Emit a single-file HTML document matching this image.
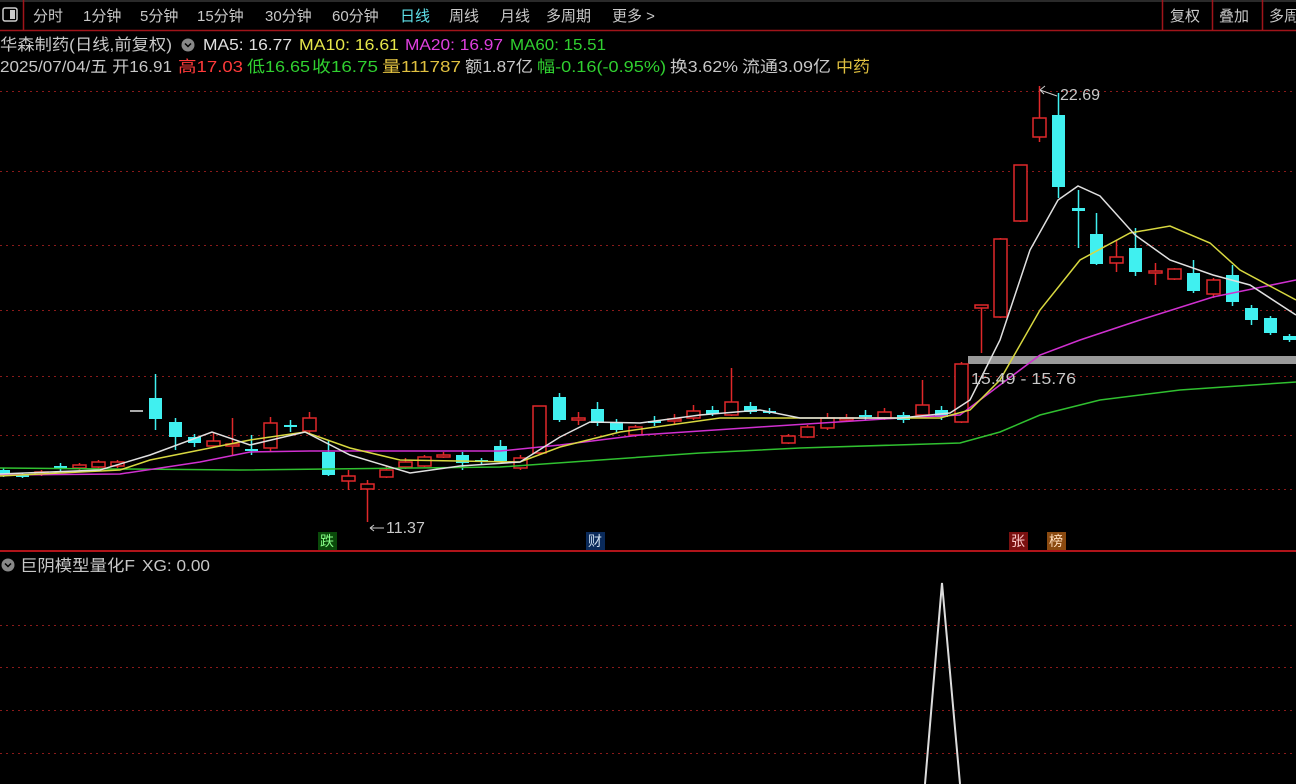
<!DOCTYPE html>
<html><head><meta charset="utf-8">
<style>
body{margin:0;background:#000;width:1296px;height:784px;overflow:hidden;font-family:"Liberation Sans","Noto Sans CJK SC",sans-serif;}
svg{position:absolute;left:0;top:0}
</style></head><body>
<svg id="s" width="1296" height="784" xmlns="http://www.w3.org/2000/svg" font-family="Liberation Sans, Noto Sans CJK SC, sans-serif">
<rect width="1296" height="784" fill="#000"/>
<line x1="0" y1="30.5" x2="1296" y2="30.5" stroke="#a0141a" stroke-width="1.5"/>
<line x1="0" y1="1" x2="1296" y2="1" stroke="#555"/>
<line x1="23.5" y1="0" x2="23.5" y2="30" stroke="#a0141a" stroke-width="1.5"/>
<rect x="3" y="8" width="14" height="13" rx="2" fill="none" stroke="#ccc" stroke-width="1.5"/>
<rect x="10" y="10" width="5" height="9" fill="#ccc"/>
<line x1="1162.5" y1="0" x2="1162.5" y2="30" stroke="#a0141a" stroke-width="1.5"/>
<line x1="1212.5" y1="0" x2="1212.5" y2="30" stroke="#a0141a" stroke-width="1.5"/>
<line x1="1262.5" y1="0" x2="1262.5" y2="30" stroke="#a0141a" stroke-width="1.5"/>
<g font-size="15" fill="#c8c8c8">
<text x="33" y="21">分时</text><text x="83" y="21">1分钟</text><text x="140" y="21">5分钟</text>
<text x="197" y="21">15分钟</text><text x="265" y="21">30分钟</text><text x="332" y="21">60分钟</text>
<text x="400" y="21" fill="#5fe0e8">日线</text><text x="449" y="21">周线</text><text x="500" y="21">月线</text>
<text x="546" y="21">多周期</text><text x="612" y="21">更多 &gt;</text>
<text x="1170" y="21">复权</text><text x="1219" y="21">叠加</text><text x="1269" y="21">多周</text>
</g>
<g font-size="16" lengthAdjust="spacingAndGlyphs">
<text x="0" y="50" fill="#c8c8c8" textLength="172" lengthAdjust="spacingAndGlyphs">华森制药(日线,前复权)</text>
<circle cx="188" cy="45" r="6.5" fill="#888"/><path d="M185 43.5l3 3 3-3" stroke="#000" stroke-width="1.5" fill="none"/>
<text x="203" y="50" fill="#e0e0e0" textLength="89" lengthAdjust="spacingAndGlyphs">MA5: 16.77</text>
<text x="299" y="50" fill="#e6e64a" textLength="100" lengthAdjust="spacingAndGlyphs">MA10: 16.61</text>
<text x="405" y="50" fill="#e040e0" textLength="98" lengthAdjust="spacingAndGlyphs">MA20: 16.97</text>
<text x="510" y="50" fill="#30d030" textLength="96" lengthAdjust="spacingAndGlyphs">MA60: 15.51</text>
<text x="0" y="72" fill="#c8c8c8" textLength="172" lengthAdjust="spacingAndGlyphs">2025/07/04/五 开16.91</text>
<text x="178" y="72" fill="#ff3a3a" textLength="65" lengthAdjust="spacingAndGlyphs">高17.03</text>
<text x="247" y="72" fill="#30d030" textLength="63" lengthAdjust="spacingAndGlyphs">低16.65</text>
<text x="312" y="72" fill="#30d030" textLength="66" lengthAdjust="spacingAndGlyphs">收16.75</text>
<text x="382" y="72" fill="#e0c040" textLength="79" lengthAdjust="spacingAndGlyphs">量111787</text>
<text x="465" y="72" fill="#c8c8c8" textLength="68" lengthAdjust="spacingAndGlyphs">额1.87亿</text>
<text x="537" y="72" fill="#30d030" textLength="129" lengthAdjust="spacingAndGlyphs">幅-0.16(-0.95%)</text>
<text x="670" y="72" fill="#c8c8c8" textLength="68" lengthAdjust="spacingAndGlyphs">换3.62%</text>
<text x="742" y="72" fill="#c8c8c8" textLength="89" lengthAdjust="spacingAndGlyphs">流通3.09亿</text>
<text x="836" y="72" fill="#e0c040" textLength="34" lengthAdjust="spacingAndGlyphs">中药</text>
</g>
<g id="grid" stroke="#8a1a1a" stroke-width="1" stroke-dasharray="2 4"></g>
<line x1="0" y1="551" x2="1296" y2="551" stroke="#b0141a" stroke-width="2"/>
<rect x="968" y="356" width="328" height="8" fill="#9a9a9a"/>
<g id="c"></g>
<g id="ma" fill="none" stroke-width="1.5"></g>
<g font-size="16" fill="#c8c8c8">
<text x="971" y="384" textLength="105" lengthAdjust="spacingAndGlyphs">15.49 - 15.76</text>
<text x="1060" y="100">22.69</text>
<path d="M1040 90l17 6M1040 90l5-4M1040 90l4 4" stroke="#ccc" fill="none"/>
<text x="386" y="533">11.37</text>
<path d="M370 528h14M370 528l4-3M370 528l4 3" stroke="#ccc" fill="none"/>
</g>
<g font-size="14">
<rect x="318" y="532" width="19" height="18" fill="#0a4a0a"/><text x="320" y="546" fill="#8f8">跌</text>
<rect x="586" y="532" width="19" height="18" fill="#0a2a5a"/><text x="588" y="546" fill="#cde">财</text>
<rect x="1009" y="532" width="19" height="18" fill="#7a1010"/><text x="1011" y="546" fill="#fcc">张</text>
<rect x="1047" y="532" width="19" height="18" fill="#8a4a10"/><text x="1049" y="546" fill="#fdb">榜</text>
</g>
<circle cx="8" cy="565" r="6.5" fill="#888"/><path d="M5 563.5l3 3 3-3" stroke="#000" stroke-width="1.5" fill="none"/>
<text x="20" y="571" font-size="16" fill="#c8c8c8" textLength="115" lengthAdjust="spacingAndGlyphs">巨阴模型量化F</text>
<text x="142" y="571" font-size="16" fill="#c8c8c8" textLength="68" lengthAdjust="spacingAndGlyphs">XG: 0.00</text>
<path d="M925 784L942 583L960 784" stroke="#ddd" stroke-width="2" fill="none"/>
</svg>
<script>
var NS="http://www.w3.org/2000/svg";
function el(p,t,a){var e=document.createElementNS(NS,t);for(var k in a)e.setAttribute(k,a[k]);p.appendChild(e);return e;}
var g=document.getElementById('grid');
[91,171,245,310,376,435,489,625,667,710,753].forEach(function(y){el(g,'line',{x1:0,y1:y+.5,x2:1296,y2:y+.5});});
var C=[[3,'c',470,474,468,477],[22,'c',475,476,473,478],[41,'r',472,474,470,476],[60,'c',466,469,463,471],[79,'r',465,468,463,470],[98,'r',462,467,460,469],[117,'r',462,466,460,468],[136,'g',410,411,410,411],
[155,'c',398,419,374,430],[175,'c',422,437,418,450],[194,'c',437,443,434,447],[213,'r',441,446,433,447],[232,'r',444,445,418,455],[251,'c',449,450,435,455],[270,'r',423,448,417,452],[290,'c',425,426,420,432],[309,'r',418,431,412,433],
[328,'c',452,475,440,476],[348,'r',476,481,470,490],[367,'r',484,489,480,522],[386,'r',470,477,466,478],[405,'r',462,467,458,469],[424,'r',457,466,455,467],[443,'r',455,456,452,458],[462,'c',455,463,452,470],[481,'c',460,461,458,464],[500,'c',446,461,440,462],[520,'r',458,468,455,470],
[539,'r',406,453,406,455],[559,'c',397,420,393,422],[578,'r',418,419,412,425],[597,'c',409,423,402,426],[616,'c',423,430,419,433],[635,'r',427,435,425,437],[654,'c',421,422,416,426],[674,'r',419,420,414,424],[693,'r',411,418,405,420],[712,'c',410,414,406,416],[731,'r',402,415,368,416],[750,'c',406,412,402,414],[769,'c',411,412,408,414],
[788,'r',436,443,434,444],[807,'r',427,437,425,438],[827,'r',418,428,413,430],[846,'r',418,419,414,422],[865,'c',415,416,410,420],[884,'r',412,418,408,420],[903,'c',415,420,412,423],[922,'r',405,415,380,416],[941,'c',410,417,406,420],
[961,'r',364,422,362,423],[981,'r',305,308,305,353],[1000,'r',239,317,238,318],[1020,'r',165,221,165,222],[1039,'r',118,137,86,142],[1058,'c',115,187,93,198],[1078,'c',208,211,190,248],[1096,'c',234,264,213,265],[1116,'r',257,263,240,272],[1135,'c',248,272,228,276],[1155,'r',271,273,263,285],[1174,'r',269,279,268,280],[1193,'c',273,291,260,293],[1213,'r',280,294,278,298],[1232,'c',275,302,265,306],[1251,'c',308,320,305,325],[1270,'c',318,333,316,335],[1289,'c',336,340,334,342]];
var cg=document.getElementById('c');
C.forEach(function(d){var x=d[0],col=d[1]=='r'?'#e0282a':(d[1]=='c'?'#40f0f0':'#aaa'),w=13;
el(cg,'line',{x1:x+.5,y1:d[4],x2:x+.5,y2:d[5],stroke:col,'stroke-width':1.5});
var h=Math.max(d[3]-d[2],2);
if(d[1]=='r')el(cg,'rect',{x:x-6,y:d[2],width:w,height:h,fill:'#000',stroke:col,'stroke-width':1.5});
else el(cg,'rect',{x:x-6,y:d[2],width:w,height:h,fill:col});});
var M={
'#30c030':[[0,468],[240,470],[500,467],[600,460],[700,453],[800,448],[960,443],[1000,432],[1040,415],[1100,400],[1180,390],[1296,382]],
'#d030d0':[[0,475],[120,474],[200,462],[250,452],[310,451],[500,451],[560,445],[640,435],[760,427],[900,418],[960,415],[1000,385],[1040,355],[1080,340],[1140,320],[1213,297],[1296,280]],
'#d8d840':[[0,476],[120,470],[150,460],[250,440],[305,432],[350,448],[400,460],[520,462],[560,447],[620,432],[720,418],[800,418],[940,418],[970,410],[1000,380],[1040,310],[1080,260],[1130,233],[1170,226],[1210,243],[1240,270],[1296,300]],
'#e0e0e0':[[0,474],[100,470],[150,455],[212,432],[250,445],[305,432],[350,455],[410,473],[460,466],[520,462],[560,437],[590,422],[640,423],[700,415],[760,410],[800,418],[900,418],[950,413],[970,400],[1000,340],[1030,250],[1058,200],[1078,186],[1100,196],[1135,235],[1170,260],[1213,275],[1250,285],[1296,315]]};
var mg=document.getElementById('ma');
for(var k in M)el(mg,'polyline',{points:M[k].map(function(p){return p.join(',')}).join(' '),stroke:k});
</script>
</body></html>
